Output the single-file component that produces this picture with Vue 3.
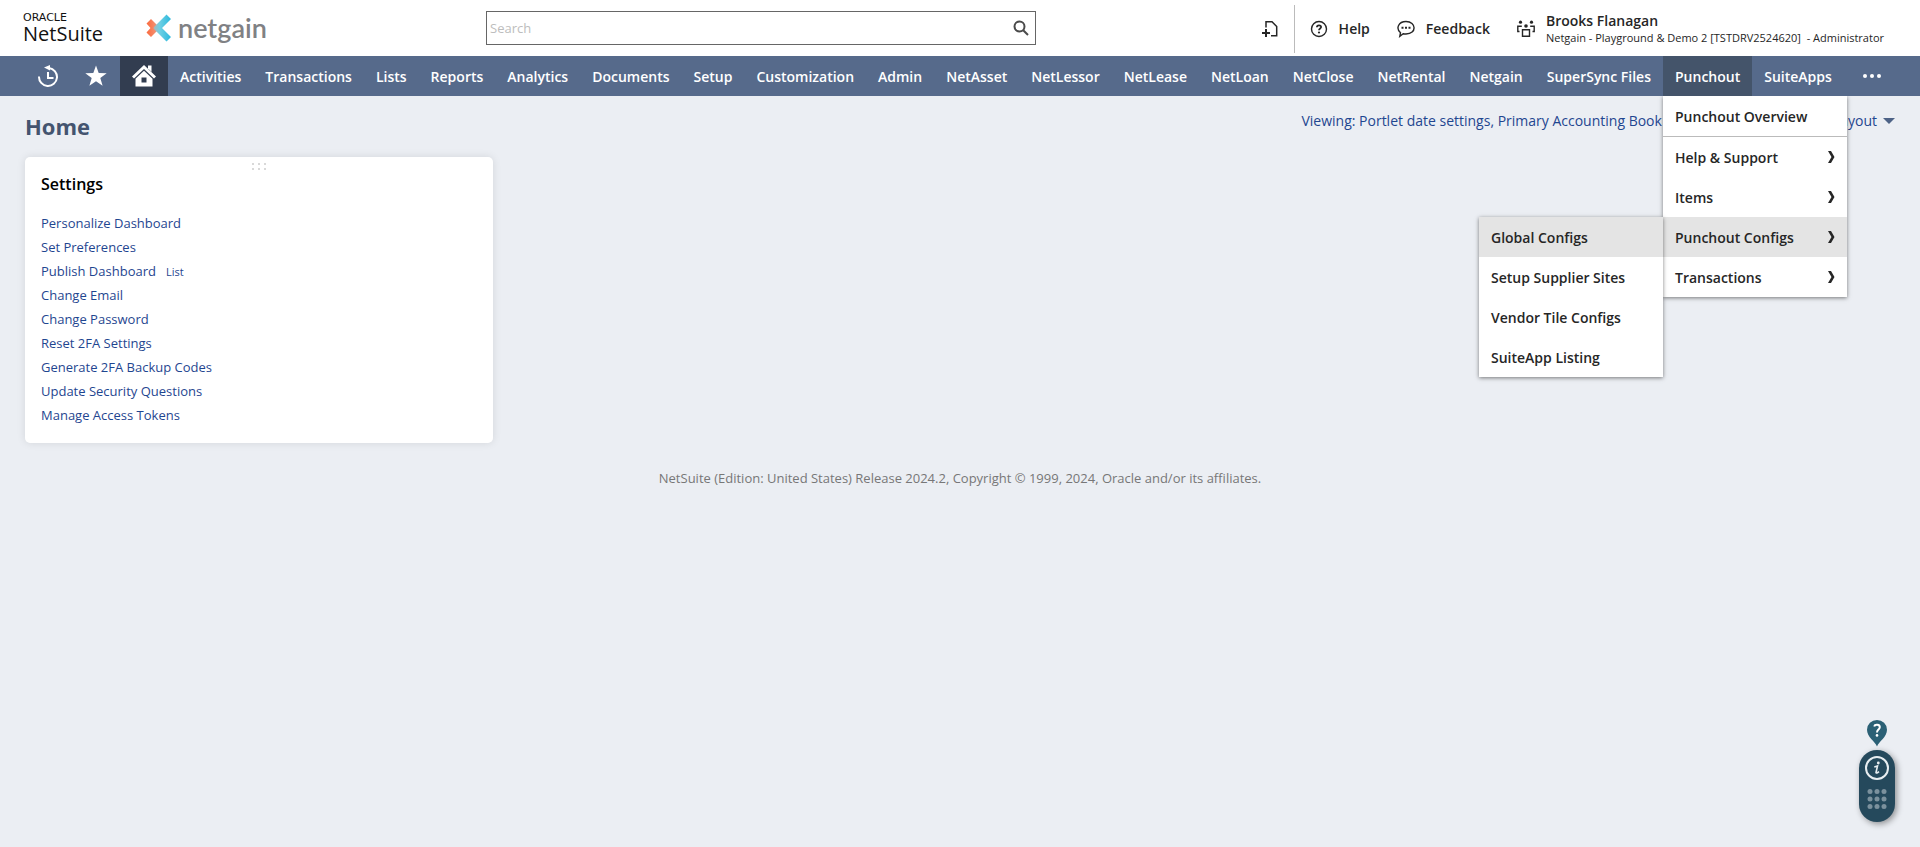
<script setup>
import { ref } from 'vue'

const query = ref('')

const navItems = [
  'Activities', 'Transactions', 'Lists', 'Reports', 'Analytics', 'Documents', 'Setup',
  'Customization', 'Admin', 'NetAsset', 'NetLessor', 'NetLease', 'NetLoan', 'NetClose',
  'NetRental', 'Netgain', 'SuperSync Files', 'Punchout', 'SuiteApps',
]

const menu = ['Help & Support', 'Items', 'Punchout Configs', 'Transactions']
const submenu = ['Global Configs', 'Setup Supplier Sites', 'Vendor Tile Configs', 'SuiteApp Listing']

const settings = [
  { label: 'Personalize Dashboard' },
  { label: 'Set Preferences' },
  { label: 'Publish Dashboard', extra: 'List' },
  { label: 'Change Email' },
  { label: 'Change Password' },
  { label: 'Reset 2FA Settings' },
  { label: 'Generate 2FA Backup Codes' },
  { label: 'Update Security Questions' },
  { label: 'Manage Access Tokens' },
]
</script>

<template>
  <div class="page">
    <header class="top">
      <div class="brand">
        <a href="#" class="netsuite">
          <span class="oracle">ORACLE</span>
          <span class="suite">NetSuite</span>
        </a>
        <a href="#" class="netgain">
          <svg width="26" height="28" viewBox="0 0 26 28" aria-hidden="true">
            <defs>
              <linearGradient id="ng-orange" x1="0" x2="1" y1="0" y2="0">
                <stop offset="0" stop-color="#fb6a3d" />
                <stop offset="0.6" stop-color="#f58a69" />
                <stop offset="1" stop-color="#b9a9a2" />
              </linearGradient>
              <linearGradient id="ng-blue" x1="0" x2="1" y1="0" y2="0">
                <stop offset="0" stop-color="#a9b6b8" />
                <stop offset="0.35" stop-color="#6fd0e4" />
                <stop offset="1" stop-color="#2bb8dd" />
              </linearGradient>
            </defs>
            <path d="M5 5 L13 13 Q14 14 13 15 L5 23 L0.5 18.5 L4.5 14 L0.5 9.5 Z" fill="url(#ng-orange)" />
            <path d="M20.500 0.500 L25 5 L16 14 L25 23 L20.500 27.500 L8 15 Q7 14 8 13 Z" fill="url(#ng-blue)" />
          </svg>
          <span>netgain</span>
        </a>
      </div>

      <form class="search" role="search" @submit.prevent>
        <input v-model="query" type="text" placeholder="Search" aria-label="Search" />
        <button type="submit" aria-label="Run search">
          <svg width="16" height="16" viewBox="0 0 16 16" fill="none" stroke="#4a4a4a" stroke-width="2">
            <circle cx="6.500" cy="6.500" r="5" />
            <path d="M10.200 10.200 L15 15" />
          </svg>
        </button>
      </form>

      <div class="tools">
        <button type="button" class="create" aria-label="Create new">
          <svg width="16" height="16" viewBox="0 0 16 16" fill="none" stroke="#262626" stroke-width="1.500">
            <path d="M4 6.500 V0.800 H10 L14.700 5.500 V14.700 H9" />
            <path d="M4 8 V16 M0 12 H8" stroke-width="2" />
          </svg>
        </button>
        <a href="#" class="tool help">
          <svg width="18" height="18" viewBox="0 0 18 18" fill="none" stroke="#262626" stroke-width="1.400">
            <circle cx="9" cy="9" r="7.500" />
            <path d="M6.900 7.300 C6.900 4.600 11.100 4.700 11.100 7.100 C11.100 8.500 9 8.500 9 10.300" stroke-width="1.800" />
            <circle cx="9" cy="12.500" r="1.100" fill="#262626" stroke="none" />
          </svg>
          <span>Help</span>
        </a>
        <a href="#" class="tool feedback">
          <svg width="18" height="18" viewBox="0 0 18 18" fill="none" stroke="#262626" stroke-width="1.400">
            <path d="M2.800 16.300 L3.500 12.700 C-1.500 8.500 1.500 1.500 9 1.500 C19.500 1.500 20 14 9 14 C8 14 7 13.900 6.200 13.700 Z" />
            <path d="M4.500 6.800 h2 v2 h-2z M8 6.800 h2 v2 h-2z M11.500 6.800 h2 v2 h-2z" fill="#262626" stroke="none" />
          </svg>
          <span>Feedback</span>
        </a>
        <a href="#" class="tool account">
          <svg width="18" height="18" viewBox="0 0 18 18" fill="none" stroke="#262626" stroke-width="1.400">
            <path d="M5.500 9.700 H12.500 V16.300 H5.500 Z M4.800 6.200 H0.800 V11.500 H2.500 M13.200 6.200 H17.200 V11.500 H15.500" />
            <g fill="#262626" stroke="none">
              <circle cx="3.500" cy="2.200" r="1.600" />
              <circle cx="14.500" cy="2.200" r="1.600" />
              <circle cx="9" cy="6" r="1.800" />
            </g>
          </svg>
          <span class="who">
            <span class="name">Brooks Flanagan</span>
            <span class="role">Netgain - Playground &amp; Demo 2 [TSTDRV2524620]&nbsp; - Administrator</span>
          </span>
        </a>
      </div>
    </header>

    <nav class="nav" aria-label="Main">
      <a href="#" class="icon-tab" aria-label="Recent records">
        <svg width="22" height="22" viewBox="0 0 22 22" fill="none" stroke="#fff" stroke-width="2">
          <path d="M2 11.500 A9 9 0 1 0 12 3" />
          <path d="M11 7 V13 H16.500" />
          <path d="M7 2.500 L13 0 V5.500 Z" fill="#fff" stroke="none" />
        </svg>
      </a>
      <a href="#" class="icon-tab" aria-label="Shortcuts">
        <svg width="22" height="22" viewBox="0 0 22 22" fill="#fff">
          <path d="M11 0.500 L13.700 8 L21.700 8.200 L15.300 13 L17.600 20.800 L11 16.200 L4.400 20.800 L6.700 13 L0.300 8.200 L8.300 8 Z" />
        </svg>
      </a>
      <a href="#" class="icon-tab home" aria-label="Home">
        <svg width="24" height="22" viewBox="0 0 24 22" fill="#fff">
          <path d="M16 0.500 H19.500 V7 L16 3.500 Z" />
          <path d="M12 0 L24 11.500 L22 13.500 L12 4 L2 13.500 L0 11.500 Z" />
          <path fill-rule="evenodd" d="M12 5.700 L20.500 13.700 V21.500 H3.500 V13.700 Z M9.500 12.500 V17.500 H14.500 V12.500 Z" />
        </svg>
      </a>
      <div v-for="item in navItems" :key="item" class="tab-wrap">
        <a href="#" class="tab" :class="{ open: item === 'Punchout' }">{{ item }}</a>
        <div v-if="item === 'Punchout'" class="menu">
          <a href="#" class="entry overview">Punchout Overview</a>
          <div v-for="m in menu" :key="m" class="branch">
            <a href="#" class="entry" :class="{ hover: m === 'Punchout Configs' }">
              {{ m }}
              <svg width="8" height="12" viewBox="0 0 8 12" fill="#262626">
                <path d="M1 0 H4 L7.500 6 L4 12 H1 L4.500 6 Z" />
              </svg>
            </a>
            <div v-if="m === 'Punchout Configs'" class="submenu">
              <a v-for="(s, i) in submenu" :key="s" href="#" class="entry" :class="{ hover: i === 0 }">{{ s }}</a>
            </div>
          </div>
        </div>
      </div>
      <button type="button" class="more" aria-label="More">
        <svg width="20" height="6" viewBox="0 0 20 6" fill="#fff">
          <circle cx="3" cy="3" r="2" /><circle cx="10" cy="3" r="2" /><circle cx="17" cy="3" r="2" />
        </svg>
      </button>
    </nav>

    <main class="content">
      <div class="title-row">
        <h1>Home</h1>
        <div class="view">
          <a href="#">Viewing: Portlet date settings, Primary Accounting Book</a>
          <a href="#" class="layout">Layout
            <svg width="12" height="6" viewBox="0 0 12 6" fill="#4d6286"><path d="M0 0 H12 L6 6 Z" /></svg>
          </a>
        </div>
      </div>

      <section class="card">
        <svg class="grip" width="14" height="7" viewBox="0 0 14 7" fill="#d9d9d9">
          <path d="M0 0h2v2h-2z M6 0h2v2h-2z M12 0h2v2h-2z M0 5h2v2h-2z M6 5h2v2h-2z M12 5h2v2h-2z" />
        </svg>
        <h2>Settings</h2>
        <ul>
          <li v-for="s in settings" :key="s.label">
            <a href="#">{{ s.label }}</a>
            <a v-if="s.extra" href="#" class="extra">{{ s.extra }}</a>
          </li>
        </ul>
      </section>
    </main>

    <footer>NetSuite (Edition: United States) Release 2024.2, Copyright © 1999, 2024, Oracle and/or its affiliates.</footer>

    <div class="assist">
      <button type="button" aria-label="Guided help">
        <svg width="20" height="27" viewBox="0 0 20 27">
          <path d="M10 26.500 C8 21.500 0 17 0 9.800 A10 9.800 0 0 1 20 9.800 C20 17 12 21.500 10 26.500 Z" fill="#2b6075" />
          <path d="M7.200 6.500 C7.800 4 13 4.200 12.800 7.300 C12.600 9.700 10 9.600 10 12.500" fill="none" stroke="#fff" stroke-width="2" />
          <circle cx="10" cy="15.400" r="1.300" fill="#fff" />
        </svg>
      </button>
      <div class="pill">
        <button type="button" aria-label="Information">
          <svg width="24" height="24" viewBox="0 0 24 24" fill="none" stroke="#e8eef1">
            <circle cx="12" cy="12" r="11" stroke-width="2" />
            <path d="M9.300 11 L12.500 10 L11 16.500 Q11.300 17.800 14 15.600" stroke-width="1.600" />
            <circle cx="13.300" cy="7" r="1.400" fill="#e8eef1" stroke="none" />
          </svg>
        </button>
        <button type="button" aria-label="Apps">
          <svg width="20" height="20" viewBox="0 0 20 20" fill="#7b919d">
            <circle cx="3" cy="2.500" r="2.500" /><circle cx="10" cy="2.500" r="2.500" /><circle cx="17" cy="2.500" r="2.500" />
            <circle cx="3" cy="10" r="2.500" /><circle cx="10" cy="10" r="2.500" /><circle cx="17" cy="10" r="2.500" />
            <circle cx="3" cy="17.500" r="2.500" /><circle cx="10" cy="17.500" r="2.500" /><circle cx="17" cy="17.500" r="2.500" />
          </svg>
        </button>
      </div>
    </div>
  </div>
</template>

<style>
body {
  background: #ebeef3;
}
</style>

<style scoped>
.page {
  min-height: 100vh;
  background: #ebeef3;
  font-family: "Open Sans", "Noto Sans", sans-serif;
  font-size: 14px;
  color: #262626;
}
.page * {
  box-sizing: border-box;
}
a {
  color: inherit;
  text-decoration: none;
}
button {
  display: block;
  padding: 0;
  border: 0;
  background: none;
  font: inherit;
  cursor: pointer;
}
svg {
  display: block;
  flex: none;
}

.top {
  display: flex;
  align-items: center;
  height: 56px;
  background: #fff;
}
.brand {
  display: flex;
  align-items: center;
  flex: 0 0 486px;
  padding-left: 23px;
}
.netsuite {
  display: flex;
  flex-direction: column;
  width: 123px;
  color: #111;
}
.oracle {
  font: 11px/12px "DejaVu Sans", sans-serif;
}
.suite {
  font-size: 20px;
  line-height: 20px;
}
.netgain {
  display: flex;
  align-items: center;
  gap: 6px;
  font: 600 27px/28px Lato, sans-serif;
  color: #808184;
}
.search {
  display: flex;
  align-items: center;
  flex: 0 1 550px;
  height: 34px;
  padding-right: 6px;
  border: 1px solid #666;
  background: #fff;
}
.search input {
  flex: 1;
  min-width: 0;
  padding: 0 3px;
  border: 0;
  outline: 0;
  background: none;
  font: 13px/20px "Open Sans", sans-serif;
}
.search input::placeholder {
  color: #bdbdbd;
}
.tools {
  display: flex;
  align-items: center;
  margin-left: auto;
  padding: 1px 36px 0 0;
}
.create {
  height: 48px;
  padding-right: 16px;
  border-right: 1px solid #bbb;
}
.tool {
  display: flex;
  align-items: center;
  gap: 11px;
  font-weight: 600;
  line-height: 18px;
}
.help {
  margin-left: 15px;
}
.feedback,
.account {
  margin-left: 27px;
}
.who {
  display: flex;
  flex-direction: column;
}
.name {
  line-height: 18px;
}
.role {
  font-size: 11px;
  font-weight: 400;
  line-height: 16px;
}

.nav {
  display: flex;
  height: 40px;
  padding-left: 24px;
  background: #566a8b;
  color: #fff;
  font-weight: 600;
}
.icon-tab {
  display: flex;
  align-items: center;
  justify-content: center;
  width: 48px;
}
.home {
  background: #323d50;
}
.tab-wrap {
  position: relative;
}
.tab {
  display: block;
  height: 40px;
  padding: 0 12px;
  line-height: 42px;
  white-space: nowrap;
}
.open {
  background: #44546a;
}
.more {
  padding: 0 18px;
}
.menu,
.submenu {
  position: absolute;
  width: 184px;
  background: #fff;
  color: #262626;
  box-shadow: 0 1px 4px rgba(0, 0, 0, 0.5);
}
.menu {
  top: 100%;
  left: 0;
  z-index: 2;
  clip-path: inset(0 -400px -400px -400px);
}
.branch {
  position: relative;
}
.submenu {
  top: 0;
  right: 100%;
}
.entry {
  display: flex;
  align-items: center;
  justify-content: space-between;
  height: 40px;
  padding: 0 12px;
  white-space: nowrap;
}
.overview {
  height: 41px;
  border-bottom: 1px solid #bbb;
}
.hover {
  background: #e4e4e4;
}

.content {
  padding: 0 25px;
}
.title-row {
  display: flex;
  justify-content: space-between;
  height: 61px;
}
h1 {
  margin: 15px 0 0;
  color: #44546f;
  font-size: 22px;
  font-weight: 700;
  line-height: 30px;
}
.view {
  display: flex;
  gap: 171px;
  padding-top: 15px;
  color: #1f4690;
  line-height: 20px;
  white-space: nowrap;
}
.layout {
  display: flex;
  align-items: center;
  height: 20px;
  gap: 6px;
}
.card {
  position: relative;
  width: 25%;
  padding: 16px;
  border-radius: 5px;
  background: #fff;
  box-shadow: 0 0 8px rgba(0, 0, 0, 0.1);
}
.grip {
  position: absolute;
  top: 6px;
  left: 50%;
  margin-left: -7px;
}
h2 {
  margin: 0 0 16px;
  color: #000;
  font-size: 16px;
  font-weight: 600;
  line-height: 22px;
}
ul {
  margin: 0;
  padding: 0;
  list-style: none;
}
li {
  display: flex;
  align-items: baseline;
  gap: 10px;
  height: 24px;
  color: #1f4690;
  font-size: 13px;
  line-height: 24px;
}
.extra {
  font-size: 11px;
}
footer {
  padding-top: 25px;
  color: #777;
  font-size: 13px;
  line-height: 20px;
  text-align: center;
}

.assist {
  position: fixed;
  right: 25px;
  bottom: 25px;
  display: flex;
  flex-direction: column;
  align-items: center;
  gap: 3px;
}
.pill {
  display: flex;
  flex-direction: column;
  align-items: center;
  gap: 9px;
  width: 36px;
  padding: 6px 0 13px;
  border-radius: 18px;
  background: #25495c;
  box-shadow: 2px 2px 6px rgba(0, 0, 0, 0.4);
}
</style>
